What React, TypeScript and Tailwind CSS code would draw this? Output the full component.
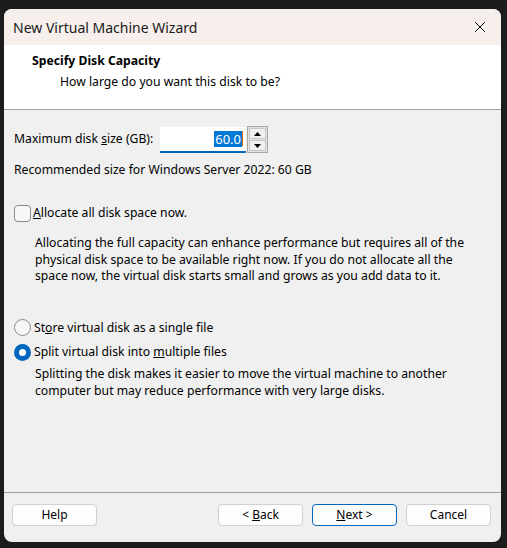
import { X } from 'lucide-react'

const font = { fontFamily: '"Noto Sans", "Open Sans", sans-serif' }

function Btn({ children, primary }: { children: React.ReactNode; primary?: boolean }) {
  return (
    <button
      className={
        primary
          ? 'w-[85px] h-[22px] rounded-[4px] border border-[#0067c0] bg-[#fdfdfd] text-[12px] text-black'
          : 'w-[85px] h-[22px] rounded-[4px] border border-[#d0d0d0] bg-[#fdfdfd] text-[12px] text-black'
      }
    >
      {children}
    </button>
  )
}

export default function App() {
  return (
    <div className="w-[507px] h-[548px] bg-[#1c1c1c] pt-[9px] px-[4px] overflow-hidden" style={font}>
      <div className="w-[497px] h-[533px] rounded-[8px] overflow-hidden bg-[#f0f0f0] flex flex-col">
        {/* title bar */}
        <div className="h-[36px] bg-[#f6efec] flex items-center justify-between pl-[9px] pr-[12px]">
          <span className="text-[14px] text-[#1a1a1a]">New Virtual Machine Wizard</span>
          <X size={18} strokeWidth={1.3} className="text-black" />
        </div>

        {/* header */}
        <div className="h-[65px] bg-white border-b border-[#a0a0a0] pt-[7px]">
          <div className="pl-[28px] text-[12.2px] font-bold text-black leading-[18px]">Specify Disk Capacity</div>
          <div className="pl-[56px] text-[12.2px] text-black leading-[18px] mt-[3px]">How large do you want this disk to be?</div>
        </div>

        {/* body */}
        <div className="flex-1 px-[10px] pt-[16px] text-[12.2px] text-black">
          <div className="flex items-center">
            <span className="w-[146px]">
              Maximum disk <u>s</u>ize (GB):
            </span>
            <div className="w-[86px] h-[26px] bg-white border-b-2 border-[#0067c0] flex items-center justify-end pr-[3px]">
              <span className="bg-[#0078d7] text-white px-[1px] leading-[16px] text-[13px]">60.0</span>
              <span className="w-[1px] h-[15px] bg-[#e06c00]" />
            </div>
            <div className="ml-[1px] w-[21px] h-[27px] border border-[#a8a8a8] bg-[#e1e1e1] flex flex-col p-[1px] gap-[1px]">
              <div className="flex-1 bg-[#f0f0f0] border border-[#c8c8c8] flex items-center justify-center">
                <svg width="7" height="4" viewBox="0 0 7 4"><path d="M3.5 0L7 4H0z" fill="#000" /></svg>
              </div>
              <div className="flex-1 bg-[#f0f0f0] border border-[#c8c8c8] flex items-center justify-center">
                <svg width="7" height="4" viewBox="0 0 7 4"><path d="M0 0h7L3.5 4z" fill="#000" /></svg>
              </div>
            </div>
          </div>

          <div className="mt-[9px] leading-[16px]">Recommended size for Windows Server 2022: 60 GB</div>

          <div className="mt-[26px] flex items-center gap-[2px]">
            <span className="w-[17px] h-[17px] rounded-[4px] border border-[#8a8a8a] bg-[#f7f7f7]" />
            <span>
              <u>A</u>llocate all disk space now.
            </span>
          </div>

          <p className="mt-[13px] ml-[21px] leading-[16.5px] w-[450px]">
            Allocating the full capacity can enhance performance but requires all of the physical disk space to be
            available right now. If you do not allocate all the space now, the virtual disk starts small and grows as
            you add data to it.
          </p>

          <div className="mt-[34px] flex items-center gap-[3px]">
            <span className="w-[17px] h-[17px] rounded-full border border-[#8a8a8a] bg-[#f7f7f7]" />
            <span>
              St<u>o</u>re virtual disk as a single file
            </span>
          </div>
          <div className="mt-[6px] flex items-center gap-[3px]">
            <span className="w-[17px] h-[17px] rounded-full bg-[#0067c0] flex items-center justify-center">
              <span className="w-[7px] h-[7px] rounded-full bg-white" />
            </span>
            <span>
              Split virtual disk into <u>m</u>ultiple files
            </span>
          </div>

          <p className="mt-[5px] ml-[21px] leading-[16.5px] w-[450px]">
            Splitting the disk makes it easier to move the virtual machine to another computer but may reduce
            performance with very large disks.
          </p>
        </div>

        {/* footer */}
        <div className="h-[50px] border-t border-[#a0a0a0] flex items-start pt-[11px] pl-[8px] pr-[10px]">
          <Btn>Help</Btn>
          <div className="flex-1" />
          <div className="flex gap-[9px]">
            <Btn>
              &lt; <u>B</u>ack
            </Btn>
            <Btn primary>
              <u>N</u>ext &gt;
            </Btn>
            <Btn>Cancel</Btn>
          </div>
        </div>
      </div>
    </div>
  )
}
